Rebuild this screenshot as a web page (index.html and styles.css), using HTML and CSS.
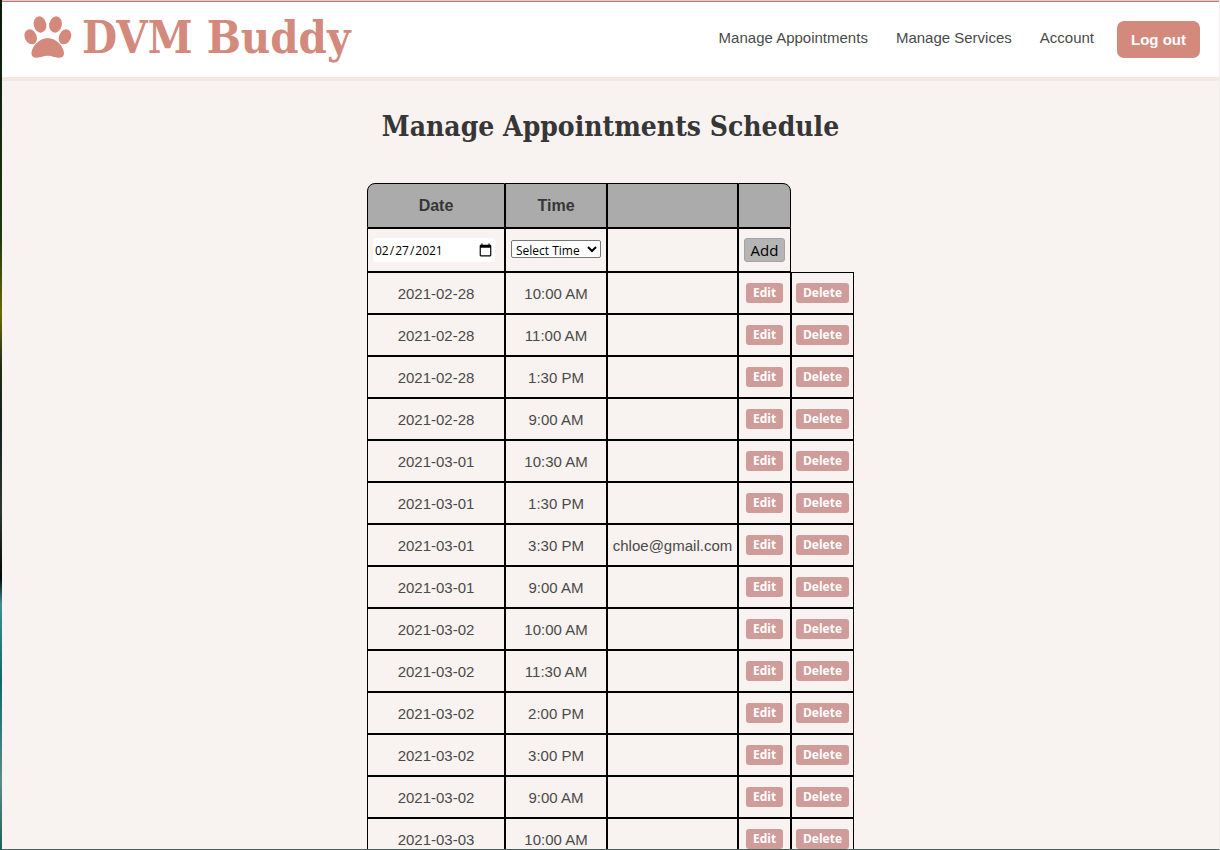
FILE: index.html
```html
<!DOCTYPE html>
<html lang="en">
<head>
<meta charset="utf-8">
<title>DVM Buddy - Manage Appointments</title>
<link rel="stylesheet" href="styles.css">
</head>
<body>
<div class="page">
<header class="header">
  <a class="logo" href="#">
    <svg class="paw" viewBox="0 0 48 42" aria-hidden="true">
      <ellipse cx="16" cy="8.500" rx="6.300" ry="8.200" transform="rotate(-12 16 8.500)"/>
      <ellipse cx="31.500" cy="8.500" rx="6.300" ry="8.200" transform="rotate(12 31.500 8.500)"/>
      <ellipse cx="6.700" cy="20.800" rx="5.900" ry="7.800" transform="rotate(-24 6.700 20.800)"/>
      <ellipse cx="41" cy="20.800" rx="5.900" ry="7.800" transform="rotate(24 41 20.800)"/>
      <path d="M23.700 22C15 22 7.500 31 7.500 37C7.500 40.500 9.500 41.700 13 41.700C17 41.700 19.500 39.800 23.700 39.800C28 39.800 30.500 41.700 34.500 41.700C38 41.700 40 40.500 40 37C40 31 32.500 22 23.700 22Z"/>
    </svg>
    <span class="brand">DVM Buddy</span>
  </a>
  <nav class="nav">
    <a class="nav-link" href="#">Manage Appointments</a>
    <a class="nav-link" href="#">Manage Services</a>
    <a class="nav-link" href="#">Account</a>
    <button class="logout" type="button">Log out</button>
  </nav>
</header>
<main class="main">
  <h1 class="title">Manage Appointments Schedule</h1>
  <table class="schedule">
    <thead>
      <tr class="head-row"><th class="col-date first">Date</th><th class="col-time">Time</th><th class="col-client"></th><th class="col-edit last"></th></tr>
    </thead>
    <tbody>
      <tr class="add-row">
        <td><input class="date-input" type="date" value="2021-02-27" aria-label="Date"></td>
        <td><select class="time-select" aria-label="Time"><option>Select Time</option></select></td>
        <td></td>
        <td><button class="add" type="button">Add</button></td>
      </tr>
      <tr><td>2021-02-28</td><td>10:00 AM</td><td></td><td><button class="action" type="button">Edit</button></td><td class="col-delete"><button class="action" type="button">Delete</button></td></tr>
      <tr><td>2021-02-28</td><td>11:00 AM</td><td></td><td><button class="action" type="button">Edit</button></td><td><button class="action" type="button">Delete</button></td></tr>
      <tr><td>2021-02-28</td><td>1:30 PM</td><td></td><td><button class="action" type="button">Edit</button></td><td><button class="action" type="button">Delete</button></td></tr>
      <tr><td>2021-02-28</td><td>9:00 AM</td><td></td><td><button class="action" type="button">Edit</button></td><td><button class="action" type="button">Delete</button></td></tr>
      <tr><td>2021-03-01</td><td>10:30 AM</td><td></td><td><button class="action" type="button">Edit</button></td><td><button class="action" type="button">Delete</button></td></tr>
      <tr><td>2021-03-01</td><td>1:30 PM</td><td></td><td><button class="action" type="button">Edit</button></td><td><button class="action" type="button">Delete</button></td></tr>
      <tr><td>2021-03-01</td><td>3:30 PM</td><td>chloe@gmail.com</td><td><button class="action" type="button">Edit</button></td><td><button class="action" type="button">Delete</button></td></tr>
      <tr><td>2021-03-01</td><td>9:00 AM</td><td></td><td><button class="action" type="button">Edit</button></td><td><button class="action" type="button">Delete</button></td></tr>
      <tr><td>2021-03-02</td><td>10:00 AM</td><td></td><td><button class="action" type="button">Edit</button></td><td><button class="action" type="button">Delete</button></td></tr>
      <tr><td>2021-03-02</td><td>11:30 AM</td><td></td><td><button class="action" type="button">Edit</button></td><td><button class="action" type="button">Delete</button></td></tr>
      <tr><td>2021-03-02</td><td>2:00 PM</td><td></td><td><button class="action" type="button">Edit</button></td><td><button class="action" type="button">Delete</button></td></tr>
      <tr><td>2021-03-02</td><td>3:00 PM</td><td></td><td><button class="action" type="button">Edit</button></td><td><button class="action" type="button">Delete</button></td></tr>
      <tr><td>2021-03-02</td><td>9:00 AM</td><td></td><td><button class="action" type="button">Edit</button></td><td><button class="action" type="button">Delete</button></td></tr>
      <tr><td>2021-03-03</td><td>10:00 AM</td><td></td><td><button class="action" type="button">Edit</button></td><td><button class="action" type="button">Delete</button></td></tr>
    </tbody>
  </table>
</main>
</div>
</body>
</html>
```
FILE: styles.css
```css
* { box-sizing: border-box; }

body {
  margin: 0;
  height: 100vh;
  overflow: hidden;
  padding-left: 2px;
  background: linear-gradient(#0a1a08 0%, #12280c 15%, #1d3a0c 28%, #6b6a08 37%, #1c2f10 43%, #14201f 50%, #2a3836 60%, #020808 68%, #3f8f90 71%, #0d6b68 80%, #5d8a8c 92%, #1c6157 100%);
  font-family: "Liberation Sans", Arial, sans-serif;
  font-size: 15px;
  color: #4a4a4a;
}

.page {
  height: 100vh;
  overflow: hidden;
  background: #f8f2f0;
  border-top: 1px solid #f3c3c0;
  border-right: 1px solid #f3eeee;
  border-bottom: 1px solid #46605a;
}

.header {
  display: flex;
  justify-content: space-between;
  align-items: flex-start;
  height: 80px;
  padding: 0 19px 0 22px;
  background: #fff;
  border-top: 1px solid #b28080;
  border-bottom: 4px solid #f4e6e1;
}

.logo {
  display: flex;
  gap: 10px;
  padding-top: 14px;
  color: #d38a7c;
  text-decoration: none;
}

.paw { width: 48px; height: 42px; fill: currentColor; }

.brand {
  font: bold 45px/44px "Roboto Slab", "DejaVu Serif Condensed", "DejaVu Serif", serif;
  white-space: nowrap;
}

.nav { display: flex; gap: 28px; padding-top: 19px; }

.nav-link { color: #4a4a4a; line-height: 34px; text-decoration: none; }

.logout {
  width: 83px;
  height: 37px;
  margin-left: -5px;
  padding: 0;
  border: 0;
  border-radius: 7px;
  background: #d38a7c;
  color: #fff;
  font: bold 15px "Liberation Sans", Arial, sans-serif;
}

.main { padding-top: 25px; }

.title {
  margin: 0 0 35px;
  color: #363636;
  font: bold 28px/42px "Roboto Slab", "DejaVu Serif Condensed", "DejaVu Serif", serif;
  text-align: center;
}

.schedule {
  margin: 0 auto;
  border-collapse: separate;
  border-spacing: 0;
  table-layout: fixed;
  width: 487px;
}

th, td {
  height: 42px;
  padding: 0;
  border: 1px solid #000;
  text-align: center;
  vertical-align: middle;
}

.head-row th { height: 45px; background: #ababab; color: #363636; font-size: 16px; }
.add-row td { height: 44px; }
.first { border-top-left-radius: 8px; }
.last { border-top-right-radius: 8px; }
.col-date { width: 138px; }
.col-time { width: 102px; }
.col-client { width: 131px; }
.col-edit { width: 53px; }
.col-delete { width: 63px; }

button, input, select { font-family: "Open Sans", "Noto Sans", sans-serif; }

.date-input {
  display: block;
  width: 122px;
  height: 24px;
  margin-left: 5px;
  padding: 0 1px;
  border: 0;
  border-radius: 3px;
  background: #fff;
  color: #000;
  font-size: 12px;
}

.date-input::-webkit-calendar-picker-indicator {
  width: 15px;
  height: 15px;
  padding: 1px;
}

.time-select {
  display: block;
  width: 90px;
  height: 18px;
  margin: 0 auto 2px;
  padding: 0;
  border: 1px solid #767676;
  border-radius: 2px;
  background-color: #fff;
  color: #000;
  font-size: 12px;
  line-height: 16px;
}

.add {
  width: 41px;
  height: 24px;
  padding: 0;
  border: 1px solid #a3a3a3;
  border-radius: 3px;
  background: #b5b5b5;
  color: #000;
  font-size: 15px;
  line-height: 20px;
}

.action {
  height: 20px;
  padding: 0 7px;
  border: 0;
  border-radius: 3px;
  background: #d09c9a;
  color: #fff;
  font-size: 12px;
  font-weight: 700;
  line-height: 20px;
}
```
